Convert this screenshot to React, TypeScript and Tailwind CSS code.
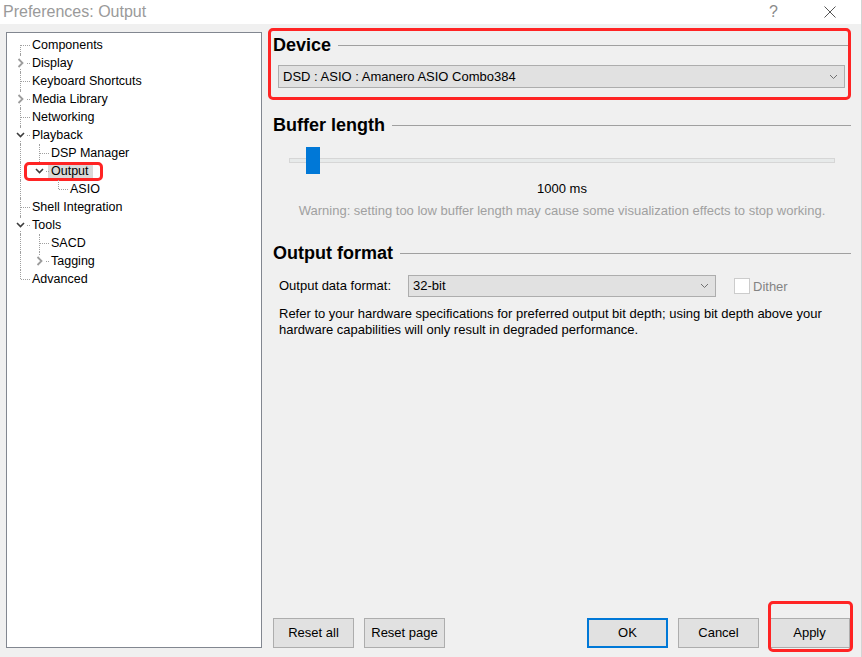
type Arrow = "open" | "closed" | null;
type Pos = "first" | "mid" | "last";

interface TreeItem {
  label: string;
  guides: boolean[];
  pos: Pos;
  arrow: Arrow;
  selected?: boolean;
}

const tree: TreeItem[] = [
  { label: "Components", guides: [], pos: "first", arrow: null },
  { label: "Display", guides: [], pos: "mid", arrow: "closed" },
  { label: "Keyboard Shortcuts", guides: [], pos: "mid", arrow: null },
  { label: "Media Library", guides: [], pos: "mid", arrow: "closed" },
  { label: "Networking", guides: [], pos: "mid", arrow: null },
  { label: "Playback", guides: [], pos: "mid", arrow: "open" },
  { label: "DSP Manager", guides: [true], pos: "mid", arrow: null },
  { label: "Output", guides: [true], pos: "last", arrow: "open", selected: true },
  { label: "ASIO", guides: [true, false], pos: "last", arrow: null },
  { label: "Shell Integration", guides: [], pos: "mid", arrow: null },
  { label: "Tools", guides: [], pos: "mid", arrow: "open" },
  { label: "SACD", guides: [true], pos: "mid", arrow: null },
  { label: "Tagging", guides: [true], pos: "last", arrow: "closed" },
  { label: "Advanced", guides: [], pos: "last", arrow: null },
];

const ChevronDown = ({ color = "#3c3c3c", w = 1.6 }: { color?: string; w?: number }) => (
  <svg width="9" height="6" viewBox="0 0 9 6">
    <path d="M1 1 L4.5 4.5 L8 1" fill="none" stroke={color} strokeWidth={w} />
  </svg>
);

const ChevronRight = () => (
  <svg width="7" height="10" viewBox="0 0 7 10">
    <path d="M1.5 1 L5.5 5 L1.5 9" fill="none" stroke="#9c9c9c" strokeWidth="1.8" />
  </svg>
);

function GuideCell({ on }: { on: boolean }) {
  return (
    <div className="relative w-[19px] h-full shrink-0">
      {on && <span className="absolute left-[9px] top-0 bottom-0 border-l border-dotted border-[#a0a0a0]" />}
    </div>
  );
}

function NodeCell({ pos, arrow }: { pos: Pos; arrow: Arrow }) {
  return (
    <div className="relative w-[19px] h-full shrink-0">
      {pos === "first" && <span className="absolute left-[9px] top-[9px] bottom-0 border-l border-dotted border-[#a0a0a0]" />}
      {pos === "mid" && <span className="absolute left-[9px] top-0 bottom-0 border-l border-dotted border-[#a0a0a0]" />}
      {pos === "last" && <span className="absolute left-[9px] top-0 h-[9px] border-l border-dotted border-[#a0a0a0]" />}
      <span className="absolute left-[10px] right-0 top-[9px] border-t border-dotted border-[#a0a0a0]" />
      {arrow && (
        <span className="absolute left-[4px] top-[3px] w-[11px] h-[12px] bg-white flex items-center justify-center">
          {arrow === "open" ? <ChevronDown /> : <ChevronRight />}
        </span>
      )}
    </div>
  );
}

function TreeRow({ item }: { item: TreeItem }) {
  return (
    <div className="relative flex items-stretch h-[18px]">
      {item.guides.map((g, i) => (
        <GuideCell key={i} on={g} />
      ))}
      <NodeCell pos={item.pos} arrow={item.arrow} />
      <div className="flex items-center">
        <span
          className={
            item.selected ? "bg-[#d9d9d9] pl-[3px] pr-[4px] leading-[15px] -ml-[1px]" : "pl-[2px] leading-[15px]"
          }
        >
          {item.label}
        </span>
      </div>
      {item.selected && (
        <span className="absolute left-[13px] top-0 w-[79px] h-[19px] border-[3px] border-[#ff2424] rounded-[5px]" />
      )}
    </div>
  );
}

function Heading({ children }: { children: string }) {
  return (
    <div className="flex items-center h-[22px]">
      <h3 className="text-[18px] font-bold text-black leading-[22px]">{children}</h3>
      <div className="flex-1 ml-[7px] h-px bg-[#a0a0a0]" />
    </div>
  );
}

function Select({ value, className }: { value: string; className: string }) {
  return (
    <div
      className={`flex items-center justify-between bg-[#e1e1e1] border border-[#adadad] pl-[4px] pr-[6px] ${className}`}
    >
      <span className="text-[13px]">{value}</span>
      <ChevronDown color="#707070" w={1} />
    </div>
  );
}

function Button({ children, primary }: { children: string; primary?: boolean }) {
  return (
    <button
      className={`w-[81px] h-[30px] bg-[#e1e1e1] text-[13px] text-black ${
        primary ? "border-2 border-[#0078d7]" : "border border-[#adadad]"
      }`}
    >
      {children}
    </button>
  );
}

export default function App() {
  return (
    <div className="w-[862px] h-[657px] bg-[#f0f0f0] flex flex-col font-['Liberation_Sans',Arial,sans-serif] text-[13px] text-black overflow-hidden border-r border-[#d4d4d4]">
      {/* title bar */}
      <div className="h-[24px] bg-white flex items-center shrink-0">
        <span className="pl-[3px] text-[16px] text-[#9a9a9a]">Preferences: Output</span>
        <span className="ml-auto text-[16px] text-[#8a8a8a] mr-[46px]">?</span>
        <svg width="12" height="12" viewBox="0 0 12 12" className="mr-[25px]">
          <path d="M0.5 0.5 L11.5 11.5 M11.5 0.5 L0.5 11.5" stroke="#555" strokeWidth="1" />
        </svg>
      </div>

      <div className="flex flex-1 pt-[8px] pb-[9px]">
        {/* tree */}
        <div className="ml-[6px] w-[256px] bg-white border border-[#828790] pl-[4px] pt-[3px] text-[12.5px]">
          {tree.map((item) => (
            <TreeRow key={item.label} item={item} />
          ))}
        </div>

        {/* page */}
        <div className="flex-1 flex flex-col pl-[11px] pr-[10px]">
          <div className="relative mt-[2px]">
            <Heading>Device</Heading>
            <Select value="DSD : ASIO : Amanero ASIO Combo384" className="mt-[9px] ml-[5px] mr-[6px] h-[23px]" />
            <span className="absolute -left-[5px] right-0 -top-[6px] -bottom-[12px] border-[3px] border-[#ff2424] rounded-[5px]" />
          </div>

          <div className="mt-[26px]">
            <Heading>Buffer length</Heading>
            <div className="relative mt-[11px] mx-[16px] h-[27px] flex items-center">
              <div className="w-full h-[5px] bg-[#e7eaea] border border-[#d6d6d6]" />
              <div className="absolute left-[17px] top-0 w-[14px] h-[27px] bg-[#0078d7]" />
            </div>
            <p className="mt-[7px] text-center leading-[16px]">1000 ms</p>
            <p className="mt-[6px] text-center leading-[16px] text-[#a0a0a0]">
              Warning: setting too low buffer length may cause some visualization effects to stop working.
            </p>
          </div>

          <div className="mt-[23px]">
            <Heading>Output format</Heading>
            <div className="flex items-center mt-[11px] pl-[6px]">
              <span className="w-[129px]">Output data format:</span>
              <Select value="32-bit" className="w-[308px] h-[22px]" />
              <span className="ml-[18px] w-[16px] h-[16px] bg-white border border-[#cccccc]" />
              <span className="ml-[3px] mt-[2px] text-[#838383]">Dither</span>
            </div>
            <p className="mt-[9px] pl-[6px] leading-[16px]">
              Refer to your hardware specifications for preferred output bit depth; using bit depth above your
              <br />
              hardware capabilities will only result in degraded performance.
            </p>
          </div>

          <div className="mt-auto flex items-end gap-[10px] pr-[1px]">
            <Button>Reset all</Button>
            <Button>Reset page</Button>
            <div className="ml-auto flex gap-[10px]">
              <Button primary>OK</Button>
              <Button>Cancel</Button>
              <div className="relative">
                <Button>Apply</Button>
                <span className="absolute -left-[1px] -right-[3px] -top-[17px] -bottom-[4px] border-[3px] border-[#ff2424] rounded-[5px]" />
              </div>
            </div>
          </div>
        </div>
      </div>
    </div>
  );
}
